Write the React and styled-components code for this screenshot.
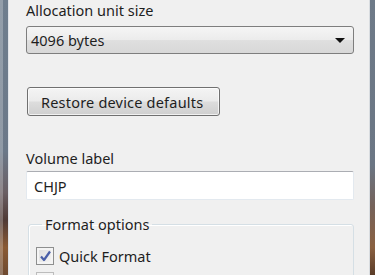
import React from 'react';
import styled, {createGlobalStyle} from 'styled-components';

const GlobalStyle = createGlobalStyle`
   html, body {
      margin: 0;
      padding: 0;
      background: #f0f0f0;
      overflow: hidden;
   }
   body {
      font-family: "Noto Sans", "Open Sans", sans-serif;
      font-size: 14.5px;
      color: #1e1e1e;
   }
`;

const Window = styled.div`
   display: flex;
   width: 375px;
   height: 275px;
   overflow: hidden;
`;

const LeftFrame = styled.div`
   flex: 0 0 8px;
   border-right: 1px solid #dfe3e8;
   background:
      linear-gradient(to right, rgba(255,255,255,0.25) 0 3px, rgba(0,0,0,0) 3px),
      linear-gradient(to bottom, #6f7e8e 0%, #6b7888 55%, #6a5f64 70%, #4f3a36 80%, #8a5a34 90%, #6e4a30 100%);
`;

const RightFrame = styled.div`
   flex: 0 0 5px;
   border-left: 1px solid #d8dce0;
   background: linear-gradient(to bottom, #6e7a88 0%, #6b7684 60%, #75625a 75%, #8a6040 90%, #5a3c28 100%);
`;

const Content = styled.div`
   flex: 1;
   padding: 0 15px 0 17px;
   display: flex;
   flex-direction: column;
   & > * {
      flex-shrink: 0;
   }
`;

const Label = styled.div`
   line-height: 20px;
   margin-top: ${p => p.$top || 0}px;
`;

const Select = styled.div`
   box-sizing: border-box;
   height: 28px;
   margin-top: 6px;
   border: 1px solid #7e7e7e;
   border-radius: 3px;
   background: linear-gradient(to bottom, #f5f5f5 0%, #ececec 48%, #dfdfdf 52%, #d8d8d8 100%);
   display: flex;
   align-items: center;
   justify-content: space-between;
   padding: 0 8px 0 4px;
`;

const Arrow = styled.span`
   width: 0;
   height: 0;
   border-left: 5px solid transparent;
   border-right: 5px solid transparent;
   border-top: 5px solid #111;
`;

const Button = styled.div`
   box-sizing: border-box;
   align-self: flex-start;
   margin: 33px 0 0 1px;
   height: 29px;
   padding: 0 16px 0 13px;
   border: 1px solid #707070;
   border-radius: 3px;
   background: linear-gradient(to bottom, #f4f4f4 0%, #ebebeb 48%, #dddddd 52%, #cfcfcf 100%);
   box-shadow: inset 0 0 0 1px rgba(255,255,255,0.7);
   display: flex;
   align-items: center;
   letter-spacing: 0.2px;
`;

const TextInput = styled.div`
   box-sizing: border-box;
   height: 29px;
   margin-top: 3px;
   border: 1px solid #e3e9ef;
   border-top-color: #abadb3;
   border-radius: 2px;
   background: #fff;
   display: flex;
   align-items: center;
   padding-left: 7px;
`;

const GroupBox = styled.fieldset`
   margin: 14px 0 0 2px;
   padding: 0 0 0 7px;
   border: 1px solid #d5dfe5;
   border-radius: 3px;
   box-shadow: inset 1px 1px 0 #fff;
   min-height: 80px;
`;

const Legend = styled.legend`
   padding: 0 3px;
   margin-left: 6px;
   line-height: 20px;
`;

const CheckRow = styled.div`
   display: flex;
   align-items: center;
   gap: 5px;
   height: 21px;
   margin-top: ${p => p.$top || 0}px;
`;

const Box = styled.span`
   width: 16px;
   height: 16px;
   border: 1px solid ${p => p.$disabled ? '#bcbcbc' : '#8e8f8f'};
   background: linear-gradient(135deg, #dcdcdc 0%, #f6f6f6 100%);
   box-shadow: inset 0 0 0 2px #f4f4f4;
   display: flex;
   align-items: center;
   justify-content: center;
`;

function Check() {
   return <svg width="13" height="12" viewBox="0 0 13 12">
      <path d="M2 6.5 L5 10 L11 1.5" fill="none" stroke="#4a5fa8" strokeWidth="2.2" strokeLinejoin="round"/>
   </svg>
}

export default function App() {
   return <Window>
      <GlobalStyle/>
      <LeftFrame/>
      <Content>
         <Label>Allocation unit size</Label>
         <Select>
            <span>4096 bytes</span>
            <Arrow/>
         </Select>
         <Button>Restore device defaults</Button>
         <Label $top={32}>Volume label</Label>
         <TextInput>CHJP</TextInput>
         <GroupBox>
            <Legend>Format options</Legend>
            <CheckRow $top={11}>
               <Box><Check/></Box>
               <span>Quick Format</span>
            </CheckRow>
            <CheckRow $top={4}>
               <Box $disabled/>
            </CheckRow>
         </GroupBox>
      </Content>
      <RightFrame/>
   </Window>
}
